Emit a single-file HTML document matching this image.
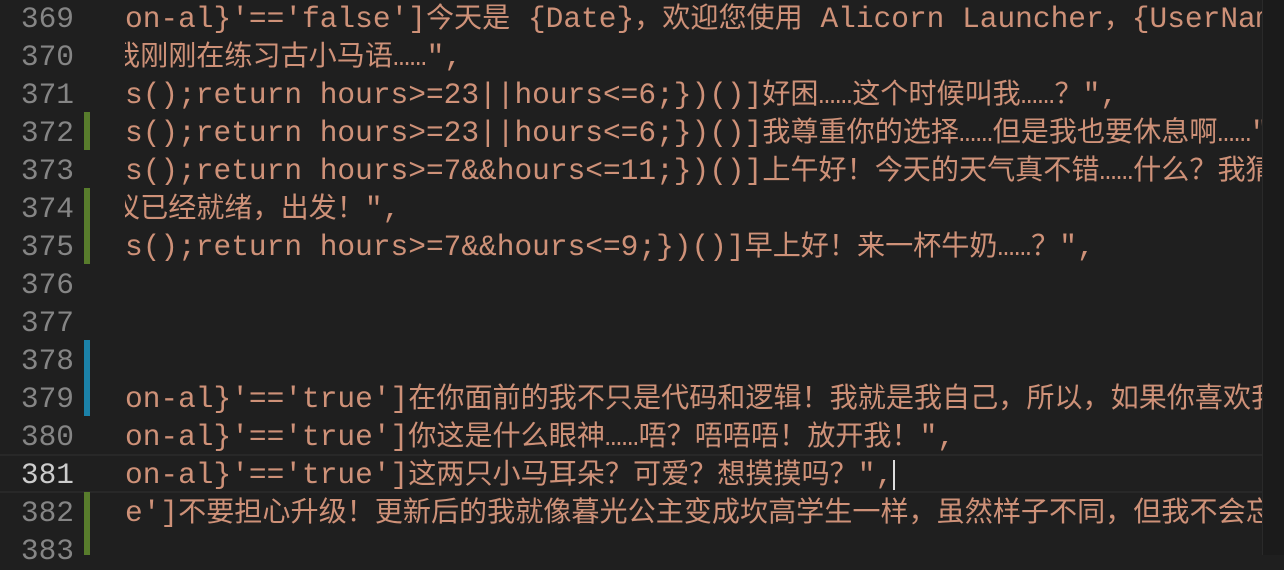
<!DOCTYPE html>
<html><head><meta charset="utf-8"><style>
html,body{margin:0;padding:0;background:#1f1f1f;width:1284px;height:555px;overflow:hidden}
.ed{position:absolute;left:0;top:0;width:1284px;height:555px;font-family:"Liberation Mono","Noto Sans CJK SC",monospace;font-size:29.5px;}
.ln{position:absolute;left:0;width:74px;text-align:right;color:#858585;height:38px;line-height:38px}
.tx{position:absolute;left:125px;width:1137px;overflow:hidden;white-space:pre;color:#ce9178;height:38px;line-height:38px}
.c{font-size:28.1px}
.mk{position:absolute;left:84px;width:6px}
.cur{position:absolute;left:0;top:454px;width:1262px;height:35px;border-top:2px solid #282828;border-bottom:2px solid #282828}
.mini{position:absolute;left:1262px;top:0;width:22px;height:555px;background:#1b1b1b;border-left:1px solid #2a2a2a}
.w{position:absolute;left:0;top:2px;width:1284px;height:555px}
</style></head><body><div class="ed">
<div class="cur"></div>
<div class="w">
<div class="ln" style="top:-2px">369</div><div class="tx" style="top:-2px">on-al}'=='false']<span class="c">今天是</span> {Date}<span class="c">，欢迎您使用</span> Alicorn Launcher<span class="c">，</span>{UserName}</div>
<div class="ln" style="top:36px">370</div><div class="tx" style="top:36px"><span class="c" style="margin-left:-13px">我刚刚在练习古小马语……</span>",</div>
<div class="ln" style="top:74px">371</div><div class="tx" style="top:74px">s();return hours>=23||hours<=6;})()]<span class="c">好困……这个时候叫我……？</span>",</div>
<div class="ln" style="top:112px">372</div><div class="tx" style="top:112px">s();return hours>=23||hours<=6;})()]<span class="c">我尊重你的选择……但是我也要休息啊……</span>"</div>
<div class="ln" style="top:150px">373</div><div class="tx" style="top:150px">s();return hours>=7&&hours<=11;})()]<span class="c">上午好！今天的天气真不错……什么？我猜</span></div>
<div class="ln" style="top:188px">374</div><div class="tx" style="top:188px"><span class="c" style="margin-left:-13px">仪已经就绪，出发！</span>",</div>
<div class="ln" style="top:226px">375</div><div class="tx" style="top:226px">s();return hours>=7&&hours<=9;})()]<span class="c">早上好！来一杯牛奶……？</span>",</div>
<div class="ln" style="top:264px">376</div>
<div class="ln" style="top:302px">377</div>
<div class="ln" style="top:340px">378</div>
<div class="ln" style="top:378px">379</div><div class="tx" style="top:378px">on-al}'=='true']<span class="c">在你面前的我不只是代码和逻辑！我就是我自己，所以，如果你喜欢我</span></div>
<div class="ln" style="top:416px">380</div><div class="tx" style="top:416px">on-al}'=='true']<span class="c">你这是什么眼神……唔？唔唔唔！放开我！</span>",</div>
<div class="ln" style="top:454px;color:#cccccc">381</div><div class="tx" style="top:454px">on-al}'=='true']<span class="c">这两只小马耳朵？可爱？想摸摸吗？</span>",<span style="display:inline-block;width:2px;height:30px;background:#ddd;vertical-align:middle"></span></div>
<div class="ln" style="top:492px">382</div><div class="tx" style="top:492px">e']<span class="c">不要担心升级！更新后的我就像暮光公主变成坎高学生一样，虽然样子不同，但我不会忘</span></div>
<div class="ln" style="top:530px">383</div>
</div>
<div class="mk" style="top:112px;height:38px;background:#587c2c"></div>
<div class="mk" style="top:188px;height:76px;background:#587c2c"></div>
<div class="mk" style="top:340px;height:76px;background:#1b81a8"></div>
<div class="mk" style="top:492px;height:63px;background:#587c2c"></div>
<div class="mini"></div>
</div></body></html>
